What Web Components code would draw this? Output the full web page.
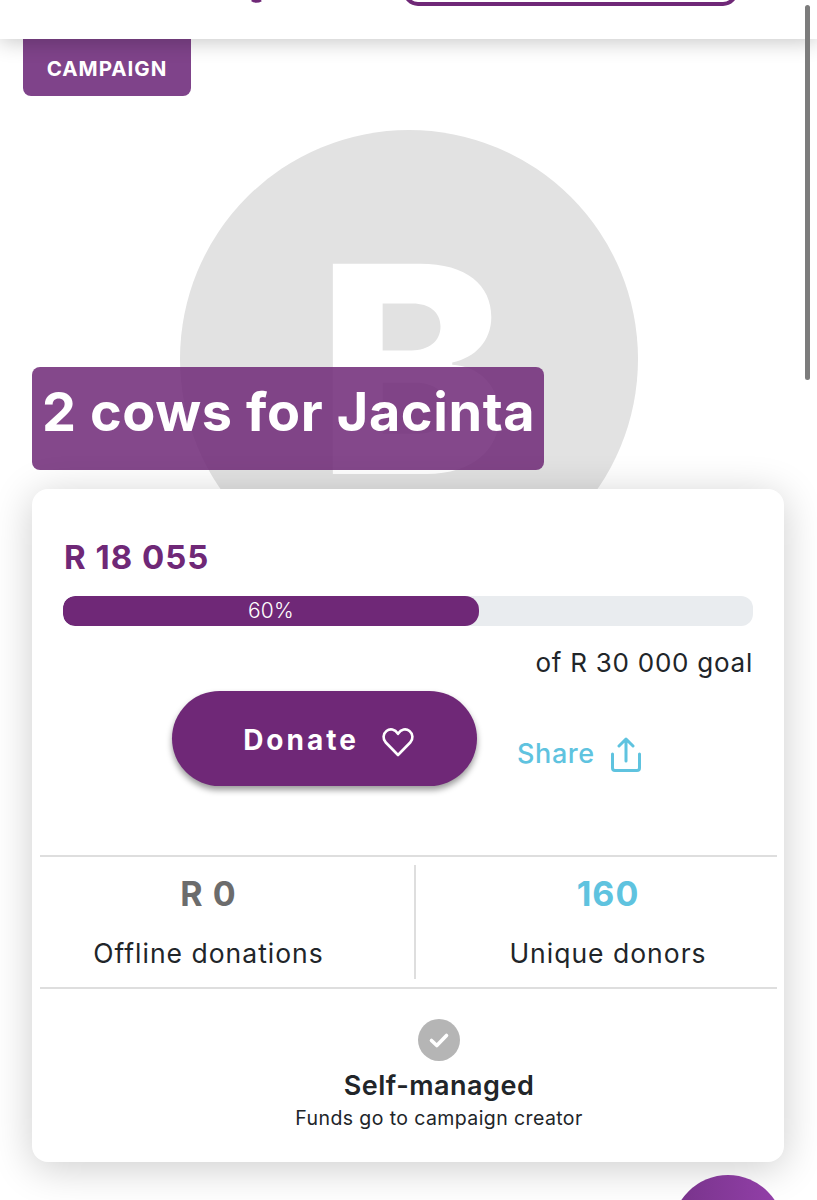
<!DOCTYPE html>
<html>
	<head>
		<style>
			html, body {
				margin: 0;
				height: 1200px;
				overflow: hidden;
				background: #fff;
				font-family: "Inter", "Liberation Sans", sans-serif;
			}
			body {
				position: relative;
			}
		</style>
	</head>

	<body>
		<top-bar></top-bar>
		<campaign-hero letter="B" tag="CAMPAIGN" title="2 cows for Jacinta"></campaign-hero>
		<campaign-card>
			<progress-bar slot="progress" value="60" amount="R 18 055" goal="of R 30 000 goal"></progress-bar>
			<donate-actions slot="actions"></donate-actions>
			<stat-cell slot="stats" value="R 0" label="Offline donations" color="#6c6c6c"></stat-cell>
			<stat-cell slot="stats" value="160" label="Unique donors" color="#5fc3df"></stat-cell>
			<managed-note slot="note" title="Self-managed" text="Funds go to campaign creator"></managed-note>
		</campaign-card>
		<page-overlays></page-overlays>
	</body>

	<script>
		class TopBar extends HTMLElement {
			constructor() {
				super();
				const shadow = this.attachShadow({ mode: 'open' });
				shadow.innerHTML = `
					<style>
						:host {
							display: flex;
							position: relative;
							z-index: 5;
							height: 39px;
							background: #fff;
							box-shadow: 0 2px 22px rgba(0, 0, 0, 0.24);
						}
						.logo {
							width: 14px;
							height: 4px;
							margin-left: 250px;
						}
						.pill {
							box-sizing: border-box;
							width: 335px;
							height: 30px;
							margin: -24px 0 0 139px;
							border: 4px solid #6f2877;
							border-radius: 18px;
						}
					</style>
					<svg class="logo" viewBox="0 0 14 4"><path d="M2 0C4 1.800 8 1.800 11 0" fill="none" stroke="#6f2877" stroke-width="3"/></svg>
					<div class="pill"></div>
				`;
			}
		}
		customElements.define('top-bar', TopBar);

		class CampaignHero extends HTMLElement {
			constructor() {
				super();
				const shadow = this.attachShadow({ mode: 'open' });
				shadow.innerHTML = `
					<style>
						:host {
							display: flex;
							justify-content: center;
							position: relative;
							height: 450px;
							padding-top: 91px;
							box-sizing: border-box;
						}
						.avatar {
							flex: none;
							display: flex;
							align-items: center;
							justify-content: center;
							box-sizing: border-box;
							width: 458px;
							height: 458px;
							padding: 20px 0 0 8px;
							border-radius: 50%;
							background: #e2e2e2;
							color: #fff;
							font: 800 289px/290px "Inter", sans-serif;
						}
						.tag {
							position: absolute;
							left: 23px;
							top: 0;
							width: 168px;
							height: 57px;
							padding-top: 2px;
							box-sizing: border-box;
							display: flex;
							align-items: center;
							justify-content: center;
							background: #7f438a;
							border-radius: 0 0 8px 8px;
							color: #fff;
							font: 700 20.500px "Inter", sans-serif;
							letter-spacing: 1px;
						}
						.title {
							position: absolute;
							left: 32px;
							top: 328px;
							box-sizing: border-box;
							width: 512px;
							height: 103px;
							padding: 15px 10px 0;
							background: rgba(111, 40, 119, 0.85);
							border-radius: 8px;
							color: #fff;
							font: 700 54px/60px "Inter", sans-serif;
							letter-spacing: 0.600px;
							white-space: nowrap;
						}
					</style>
					<div class="avatar"></div>
					<div class="tag"></div>
					<div class="title"></div>
				`;
			}

			connectedCallback() {
				this.shadowRoot.querySelector('.avatar').textContent = this.getAttribute('letter');
				this.shadowRoot.querySelector('.tag').textContent = this.getAttribute('tag');
				this.shadowRoot.querySelector('.title').textContent = this.getAttribute('title');
			}
		}
		customElements.define('campaign-hero', CampaignHero);

		class CampaignCard extends HTMLElement {
			constructor() {
				super();
				const shadow = this.attachShadow({ mode: 'open' });
				shadow.innerHTML = `
					<style>
						:host {
							display: block;
							position: relative;
							box-sizing: border-box;
							width: 752px;
							height: 673px;
							margin-left: 32px;
							padding: 0 8px;
							background: #fff;
							border-radius: 16px;
							box-shadow: 0 6px 40px rgba(0, 0, 0, 0.2);
						}
						.stats {
							display: grid;
							grid-template-columns: 376px 1fr;
							height: 134px;
							box-sizing: border-box;
							padding: 8px 0;
							margin-right: -1px;
							border-top: 2px solid #dedede;
							border-bottom: 2px solid #dedede;
						}
						::slotted(stat-cell:first-of-type) {
							padding-right: 37px;
							border-right: 2px solid #dedede;
						}
						::slotted(stat-cell:last-of-type) {
							padding-left: 23px;
						}
					</style>
					<slot name="progress"></slot>
					<slot name="actions"></slot>
					<div class="stats"><slot name="stats"></slot></div>
					<slot name="note"></slot>
				`;
			}
		}
		customElements.define('campaign-card', CampaignCard);

		class ProgressBar extends HTMLElement {
			constructor() {
				super();
				const shadow = this.attachShadow({ mode: 'open' });
				shadow.innerHTML = `
					<style>
						:host {
							display: block;
							padding: 48px 23px 0;
						}
						.amount {
							height: 59px;
							padding-left: 1px;
							color: #6f2877;
							font: 700 33px/40px "Inter", sans-serif;
							letter-spacing: 1px;
						}
						.track {
							height: 30px;
							background: #e9ecef;
							border-radius: 12px;
							overflow: hidden;
						}
						.fill {
							height: 100%;
							background: #6f2877;
							border-radius: 12px 14px 14px 12px;
							color: #fff;
							text-align: center;
							font: 300 21px/30px "Inter", sans-serif;
							letter-spacing: 0.300px;
						}
						.goal {
							margin-top: 20px;
							text-align: right;
							color: #212529;
							font: 400 26px/34px "Inter", sans-serif;
							letter-spacing: 0.750px;
						}
					</style>
					<div class="amount"></div>
					<div class="track"><div class="fill"></div></div>
					<div class="goal"></div>
				`;
			}

			connectedCallback() {
				const value = this.getAttribute('value');
				const fill = this.shadowRoot.querySelector('.fill');
				this.shadowRoot.querySelector('.amount').textContent = this.getAttribute('amount');
				fill.style.width = 'calc(' + value + '% + 2px)';
				fill.textContent = value + '%';
				this.shadowRoot.querySelector('.goal').textContent = this.getAttribute('goal');
			}
		}
		customElements.define('progress-bar', ProgressBar);

		class DonateActions extends HTMLElement {
			constructor() {
				super();
				const shadow = this.attachShadow({ mode: 'open' });
				shadow.innerHTML = `
					<style>
						:host {
							display: flex;
							height: 175px;
							padding: 11px 0 0 132px;
							box-sizing: border-box;
						}
						.donate {
							display: flex;
							align-items: center;
							justify-content: center;
							gap: 23px;
							box-sizing: border-box;
							width: 305px;
							height: 95px;
							padding-left: 8px;
							border-radius: 48px;
							background: #6f2877;
							box-shadow: 0 4px 6px rgba(0, 0, 0, 0.4);
							color: #fff;
							font: 700 28px "Inter", sans-serif;
							letter-spacing: 3px;
						}
						.donate span {
							padding-top: 2px;
						}
						.donate svg {
							margin-top: 6px;
						}
						.share {
							display: flex;
							align-items: flex-start;
							gap: 15px;
							height: 36px;
							margin: 46px 0 0 40px;
							color: #5fc3df;
							font: 500 27px/34px "Inter", sans-serif;
							letter-spacing: 0.600px;
						}
					</style>
					<div class="donate">
						<span>Donate</span>
						<svg width="32" height="30" viewBox="0 0 32 30" fill="none" stroke="#fff" stroke-width="2.600" stroke-linejoin="round">
							<path d="M16 28 3.800 15.500C0.500 12 1 6.800 4.500 4 8 1.300 12.800 2 16 6.800 19.200 2 24 1.300 27.500 4 31 6.800 31.500 12 28.200 15.500Z"/>
						</svg>
					</div>
					<div class="share">
						<span>Share</span>
						<svg width="32" height="36" viewBox="0 0 32 36" fill="none" stroke="#5fc3df" stroke-width="3" stroke-linecap="round" stroke-linejoin="round">
							<path d="M16 24V2M9 9 16 2l7 7M2.500 17V31A2.500 2.500 0 0 0 5 33.500H27A2.500 2.500 0 0 0 29.500 31V17"/>
						</svg>
					</div>
				`;
			}
		}
		customElements.define('donate-actions', DonateActions);

		class StatCell extends HTMLElement {
			constructor() {
				super();
				const shadow = this.attachShadow({ mode: 'open' });
				shadow.innerHTML = `
					<style>
						:host {
							display: block;
							box-sizing: border-box;
							text-align: center;
						}
						.value {
							margin-top: 8px;
							height: 63px;
							font: 700 34px/42px "Inter", sans-serif;
							letter-spacing: 1px;
						}
						.label {
							color: #212529;
							font: 400 26.500px/34px "Inter", sans-serif;
							letter-spacing: 1px;
						}
					</style>
					<div class="value"></div>
					<div class="label"></div>
				`;
			}

			connectedCallback() {
				const value = this.shadowRoot.querySelector('.value');
				value.textContent = this.getAttribute('value');
				value.style.color = this.getAttribute('color');
				this.shadowRoot.querySelector('.label').textContent = this.getAttribute('label');
			}
		}
		customElements.define('stat-cell', StatCell);

		class ManagedNote extends HTMLElement {
			constructor() {
				super();
				const shadow = this.attachShadow({ mode: 'open' });
				shadow.innerHTML = `
					<style>
						:host {
							display: flex;
							flex-direction: column;
							align-items: center;
							padding: 30px 0 0 62px;
							color: #212529;
						}
						svg {
							display: block;
						}
						.title {
							margin-top: 8px;
							font: 600 27px/34px "Inter", sans-serif;
							letter-spacing: 0.500px;
						}
						.text {
							font: 400 19.500px/30px "Inter", sans-serif;
							letter-spacing: 0.400px;
						}
					</style>
					<svg width="42" height="42" viewBox="0 0 42 42">
						<circle cx="21" cy="21" r="21" fill="#b5b5b5"/>
						<path d="M13.500 21.500 18.800 26.500 28.500 16.500" fill="none" stroke="#fff" stroke-width="3.600" stroke-linecap="round" stroke-linejoin="round"/>
					</svg>
					<div class="title"></div>
					<div class="text"></div>
				`;
			}

			connectedCallback() {
				this.shadowRoot.querySelector('.title').textContent = this.getAttribute('title');
				this.shadowRoot.querySelector('.text').textContent = this.getAttribute('text');
			}
		}
		customElements.define('managed-note', ManagedNote);

		class PageOverlays extends HTMLElement {
			constructor() {
				super();
				const shadow = this.attachShadow({ mode: 'open' });
				shadow.innerHTML = `
					<style>
						.thumb {
							position: absolute;
							z-index: 9;
							left: 805px;
							top: 5px;
							width: 5px;
							height: 375px;
							border-radius: 3px;
							background: #7c7c7c;
						}
						.fab-clip {
							position: absolute;
							z-index: 9;
							left: 672px;
							top: 1175px;
							width: 112px;
							height: 25px;
							overflow: hidden;
						}
						.fab {
							width: 112px;
							height: 112px;
							border-radius: 50%;
							background: linear-gradient(90deg, #77338a, #9440aa);
						}
					</style>
					<div class="thumb"></div>
					<div class="fab-clip"><div class="fab"></div></div>
				`;
			}
		}
		customElements.define('page-overlays', PageOverlays);
	</script>
</html>
